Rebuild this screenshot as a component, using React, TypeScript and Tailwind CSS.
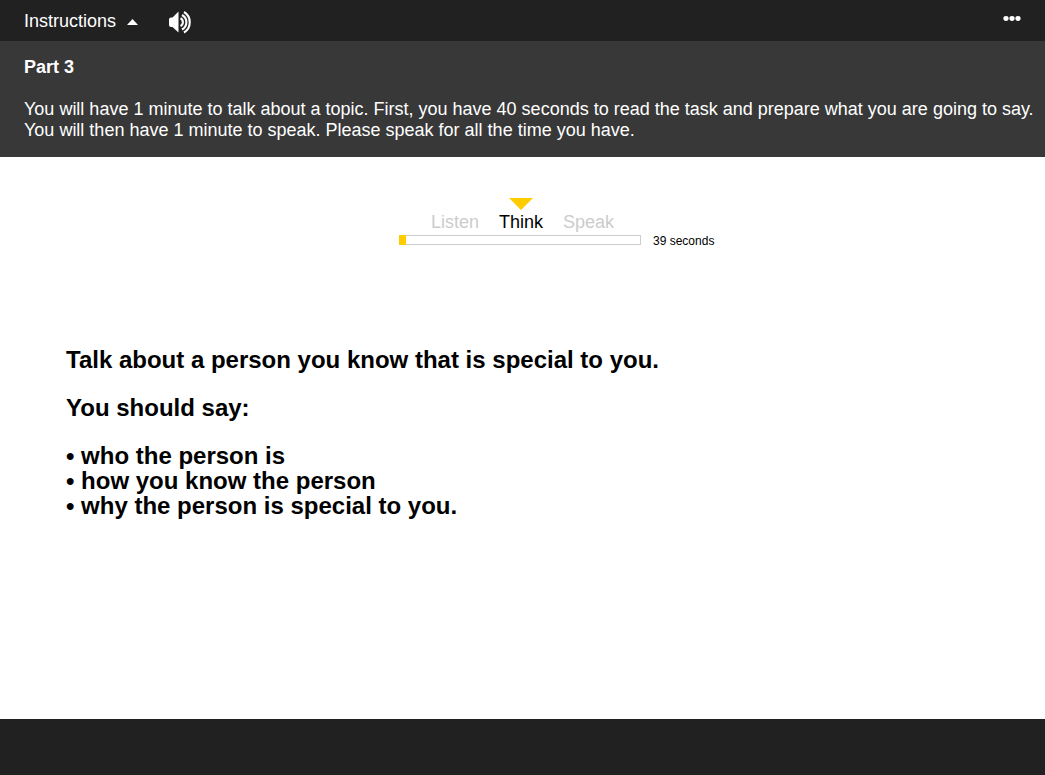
const bullets = ["who the person is", "how you know the person", "why the person is special to you."];

function SpeakerIcon() {
  return (
    <svg width="24" height="24" viewBox="0 0 24 24" fill="none" aria-hidden="true">
      <path d="M1 9.500Q1 7.500 3 7.500H4.500L10.500 1.500V22.500L4.500 17H3Q1 17 1 15Z" fill="#fff" />
      <path d="M12.500 8.300a4.300 4.300 0 0 1 0 7.700" stroke="#fff" strokeWidth="2.100" />
      <path d="M14 5a8.200 8.200 0 0 1 0 14.500" stroke="#fff" strokeWidth="2.100" />
      <path d="M16 2a12 12 0 0 1 0 20.500" stroke="#fff" strokeWidth="2.100" />
    </svg>
  );
}

export default function App() {
  return (
    <div className="flex min-h-screen flex-col bg-white font-['Liberation_Sans',Arial,sans-serif] text-black">
      <header className="flex h-[41px] items-center bg-[#212121] px-6 text-white">
        <button type="button" aria-expanded="true" className="flex items-center gap-[10px] text-lg">
          Instructions
          <svg width="12" height="8" viewBox="0 0 12 8" aria-hidden="true">
            <path d="M1 8 6.500 2l5.500 6z" fill="#fff" />
          </svg>
        </button>
        <button type="button" aria-label="Play audio" className="ml-[30px] pt-[2px]">
          <SpeakerIcon />
        </button>
        <button type="button" aria-label="More options" className="ml-auto pb-1">
          <svg width="18" height="6" viewBox="0 0 18 6" fill="#fff" aria-hidden="true">
            <ellipse cx="3" cy="2.500" rx="2.600" ry="2.400" />
            <ellipse cx="9" cy="2.500" rx="2.600" ry="2.400" />
            <ellipse cx="15" cy="2.500" rx="2.600" ry="2.400" />
          </svg>
        </button>
      </header>
      <section className="bg-[#383838] py-4 pr-1 pl-6 text-lg leading-[21px] text-white">
        <h1 className="font-bold">Part 3</h1>
        <p className="mt-[21px]">
          You will have 1 minute to talk about a topic. First, you have 40 seconds to read the task and prepare what you
          are going to say. You will then have 1 minute to speak. Please speak for all the time you have.
        </p>
      </section>
      <main className="flex-1">
        <div className="grid grid-cols-[1fr_242px_1fr] gap-x-3 pt-10 pr-[5px]">
          <ol className="col-start-2 flex items-end justify-center gap-5 pl-[5px] text-lg leading-6 text-[#cccccc]">
            <li>Listen</li>
            <li aria-current="step" className="flex flex-col items-center text-black">
              <svg width="24" height="13" viewBox="0 0 24 13" aria-hidden="true">
                <path d="M0 1h24L12 13z" fill="#ffcc00" />
              </svg>
              Think
            </li>
            <li>Speak</li>
          </ol>
          <div
            role="progressbar"
            aria-label="Preparation time"
            aria-valuenow={1}
            aria-valuemax={40}
            className="col-start-2 mt-px h-[10px] border border-[#cccccc]"
          >
            <div className="-mt-px -ml-px h-[10px] w-[7px] bg-[#ffcc00]" />
          </div>
          <span className="text-xs leading-[14px]">39 seconds</span>
        </div>
        <div className="mt-[100px] px-[66px] text-2xl leading-6 font-bold">
          <p>Talk about a person you know that is special to you.</p>
          <p className="mt-6">You should say:</p>
          <ul className="mt-[23px] leading-[25px]">
            {bullets.map((b) => (
              <li key={b}>• {b}</li>
            ))}
          </ul>
        </div>
      </main>
      <footer className="h-14 bg-[#212121]" />
    </div>
  );
}
